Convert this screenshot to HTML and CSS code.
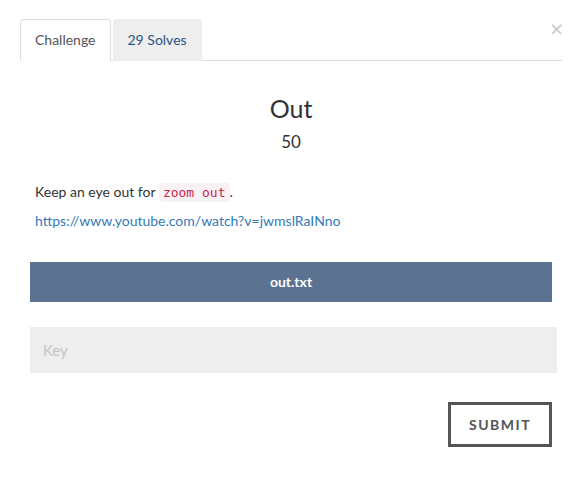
FILE: index.html
```html
<!DOCTYPE html>
<html>
<head>
<meta charset="utf-8">
<link rel="stylesheet" href="styles.css">
</head>
<body>
<div class="modal">
  <button class="close" type="button">×</button>
  <ul class="tabs">
    <li class="tab active">Challenge</li>
    <li class="tab">29 Solves</li>
  </ul>
  <div class="content">
    <h2 class="title">Out</h2>
    <h3 class="value">50</h3>
    <div class="desc">
      <p class="line">Keep an eye out for <code class="code">zoom out</code>.</p>
      <p class="line"><a class="link" href="#">https://www.youtube.com/watch?v=jwmslRaINno</a></p>
    </div>
    <a class="file" href="#">out.txt</a>
    <input class="key" type="text" placeholder="Key">
    <div class="actions">
      <button class="submit" type="button">SUBMIT</button>
    </div>
  </div>
</div>
</body>
</html>
```
FILE: styles.css
```css
* { box-sizing: border-box; }
html, body { margin: 0; padding: 0; background: #fff; }
body {
  font-family: Lato, "Open Sans", "Liberation Sans", sans-serif;
  font-size: 14px;
  color: #333;
}
.modal {
  position: relative;
  padding: 19px 22px 0 20px;
}
.close {
  position: absolute;
  top: 18px;
  right: 20px;
  border: 0;
  background: none;
  padding: 0;
  font-family: "DejaVu Sans", sans-serif;
  font-size: 18px;
  line-height: 22px;
  color: #c8c8c8;
}
.tabs {
  list-style: none;
  margin: 0;
  padding: 0;
  display: flex;
  gap: 2px;
  border-bottom: 1px solid #ddd;
}
.tab {
  padding: 10px 14px;
  line-height: 20px;
  border: 1px solid transparent;
  border-radius: 4px 4px 0 0;
  margin-bottom: -1px;
  background: #eee;
  color: #2a5487;
  font-size: 14px;
}
.tab.active {
  background: #fff;
  border-color: #ddd;
  border-bottom-color: transparent;
  color: #555;
}
.content {
  padding: 0 10px;
}
.title {
  margin: 32px 0 0;
  font-size: 25px;
  line-height: 30px;
  font-weight: 400;
  text-align: center;
  color: #333;
}
.value {
  margin: 7px 0 0;
  font-size: 17px;
  line-height: 24px;
  font-weight: 400;
  text-align: center;
  color: #333;
}
.desc {
  padding: 0 5px;
  margin-top: 28px;
}
.line {
  margin: 0 0 8px;
  line-height: 20px;
}
.code {
  font-family: "DejaVu Sans Mono", "Liberation Mono", monospace;
  font-size: 13px;
  padding: 2px 4px;
  color: #c7254e;
  background: #f9f2f4;
  border-radius: 4px;
}
.link {
  color: #337ab7;
  text-decoration: none;
}
.file {
  display: block;
  margin-top: 31px;
  height: 40px;
  line-height: 40px;
  text-align: center;
  background: #5b7290;
  color: #fff;
  font-weight: 700;
  text-decoration: none;
}
.key {
  display: block;
  margin-top: 25px;
  width: calc(100% + 5px);
  height: 46px;
  border: 0;
  background: #eee;
  padding: 0 13px;
  font-family: inherit;
  font-size: 15px;
  color: #333;
  outline: none;
}
.key::placeholder { color: #c4c4c4; }
.actions {
  display: flex;
  justify-content: flex-end;
  margin-top: 29px;
}
.submit {
  width: 104px;
  height: 45px;
  border: 3px solid #555;
  background: #fff;
  color: #555;
  font-family: inherit;
  font-size: 14px;
  font-weight: 700;
  letter-spacing: 1.5px;
  padding: 0;
}
```
